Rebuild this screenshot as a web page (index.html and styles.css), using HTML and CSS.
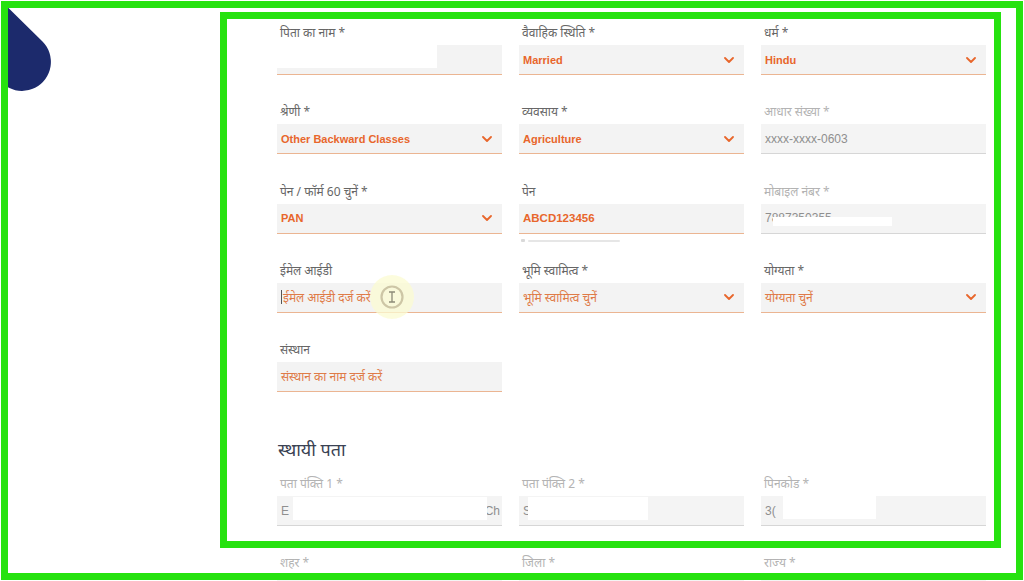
FILE: index.html
```html
<!DOCTYPE html>
<html lang="hi">
<head>
<meta charset="utf-8">
<title>फॉर्म</title>
<link rel="stylesheet" href="styles.css">
</head>
<body>
<div class="screen">
  <aside class="side">
    <svg class="logo" viewBox="8 8 52 92" width="52" height="92" aria-hidden="true">
      <path d="M-20 -20 L42.5 41.5 A29 29 0 1 1 -6.7 66.7 Z" fill="#1c2a6c"/>
    </svg>
  </aside>

  <main class="form">
    <div class="grid">
      <div class="field">
        <label class="lbl">पिता का नाम *</label>
        <div class="input"><span class="redact r-father"></span></div>
      </div>
      <div class="field">
        <label class="lbl">वैवाहिक स्थिति *</label>
        <div class="input select"><span class="val">Married</span><svg class="chev" viewBox="0 0 10 6" width="10" height="6"><path d="M1 1l4 4 4-4"/></svg></div>
      </div>
      <div class="field">
        <label class="lbl">धर्म *</label>
        <div class="input select"><span class="val">Hindu</span><svg class="chev" viewBox="0 0 10 6" width="10" height="6"><path d="M1 1l4 4 4-4"/></svg></div>
      </div>

      <div class="field">
        <label class="lbl">श्रेणी *</label>
        <div class="input select"><span class="val">Other Backward Classes</span><svg class="chev" viewBox="0 0 10 6" width="10" height="6"><path d="M1 1l4 4 4-4"/></svg></div>
      </div>
      <div class="field">
        <label class="lbl">व्यवसाय *</label>
        <div class="input select"><span class="val">Agriculture</span><svg class="chev" viewBox="0 0 10 6" width="10" height="6"><path d="M1 1l4 4 4-4"/></svg></div>
      </div>
      <div class="field">
        <label class="lbl lbl-off">आधार संख्या *</label>
        <div class="input off"><span class="val-off">xxxx-xxxx-0603</span></div>
      </div>

      <div class="field">
        <label class="lbl">पेन / फॉर्म 60 चुनें *</label>
        <div class="input select"><span class="val">PAN</span><svg class="chev" viewBox="0 0 10 6" width="10" height="6"><path d="M1 1l4 4 4-4"/></svg></div>
      </div>
      <div class="field">
        <label class="lbl">पेन</label>
        <div class="input"><span class="val val-pan">ABCD123456</span></div>
        <div class="hint"><span class="hint-dot"></span><span class="hint-line"></span></div>
      </div>
      <div class="field">
        <label class="lbl lbl-off">मोबाइल नंबर *</label>
        <div class="input off"><span class="val-off">7887350355</span><span class="redact r-mobile"></span></div>
      </div>

      <div class="field">
        <label class="lbl">ईमेल आईडी</label>
        <div class="input"><span class="caret"></span><span class="ph">ईमेल आईडी दर्ज करें</span>
          <svg class="cursor" viewBox="0 0 50 50" width="50" height="50" aria-hidden="true">
            <circle cx="25" cy="25" r="22" fill="#fbfbd2" opacity="0.75"/>
            <circle cx="25" cy="25" r="10.5" fill="none" stroke="#cdc6a6" stroke-width="2.2"/>
            <path d="M22 20h6M25 20v10M22 30h6" fill="none" stroke="#8c8a78" stroke-width="1.3"/>
          </svg>
        </div>
      </div>
      <div class="field">
        <label class="lbl">भूमि स्वामित्व *</label>
        <div class="input select"><span class="ph">भूमि स्वामित्व चुनें</span><svg class="chev" viewBox="0 0 10 6" width="10" height="6"><path d="M1 1l4 4 4-4"/></svg></div>
      </div>
      <div class="field">
        <label class="lbl">योग्यता *</label>
        <div class="input select"><span class="ph">योग्यता चुनें</span><svg class="chev" viewBox="0 0 10 6" width="10" height="6"><path d="M1 1l4 4 4-4"/></svg></div>
      </div>

      <div class="field">
        <label class="lbl">संस्थान</label>
        <div class="input"><span class="ph">संस्थान का नाम दर्ज करें</span></div>
      </div>
    </div>

    <h2 class="section-title">स्थायी पता</h2>

    <div class="grid">
      <div class="field">
        <label class="lbl lbl-off">पता पंक्ति 1 *</label>
        <div class="input off split"><span class="val-off">E</span><span class="val-off">Ch</span><span class="redact r-addr1"></span></div>
      </div>
      <div class="field">
        <label class="lbl lbl-off">पता पंक्ति 2 *</label>
        <div class="input off"><span class="val-off">S</span><span class="redact r-addr2"></span></div>
      </div>
      <div class="field">
        <label class="lbl lbl-off">पिनकोड *</label>
        <div class="input off"><span class="val-off">3(</span><span class="redact r-pin"></span></div>
      </div>

      <div class="field">
        <label class="lbl lbl-off">शहर *</label>
        <div class="input off"></div>
      </div>
      <div class="field">
        <label class="lbl lbl-off">जिला *</label>
        <div class="input off"></div>
      </div>
      <div class="field">
        <label class="lbl lbl-off">राज्य *</label>
        <div class="input off"></div>
      </div>
    </div>
  </main>

  <div class="frame frame-outer"></div>
  <div class="frame frame-inner"></div>
</div>
</body>
</html>
```

FILE: styles.css
```css
* { box-sizing: border-box; }

html, body {
  margin: 0;
  padding: 0;
  background: #ffffff;
}

body {
  font-family: "Noto Sans", "Liberation Sans", sans-serif;
}

.screen {
  position: relative;
  display: flex;
  width: 1024px;
  height: 581px;
  overflow: hidden;
  background: #ffffff;
}

.side {
  flex: none;
  width: 277px;
  padding: 8px 0 0 8px;
}

.logo {
  display: block;
}

.form {
  flex: none;
  width: 709px;
  padding-top: 25px;
}

.grid {
  display: grid;
  grid-template-columns: repeat(3, 225px);
  column-gap: 17px;
  row-gap: 29.25px;
}

.field {
  display: flex;
  flex-direction: column;
}

.lbl {
  display: block;
  height: 16px;
  margin-bottom: 4px;
  padding-left: 3px;
  font-size: 12px;
  line-height: 16px;
  color: #666666;
  white-space: nowrap;
}

.lbl-off {
  color: #b3b3b3;
}

.input {
  position: relative;
  display: flex;
  align-items: center;
  height: 30px;
  padding: 0 10px 0 4px;
  background: #f3f3f3;
  border-bottom: 1.5px solid #ebb592;
  font-size: 12px;
}

.input.off {
  background: #f4f4f4;
  border-bottom-color: #d6d6d6;
}

.select {
  justify-content: space-between;
}

.split {
  justify-content: space-between;
  padding-right: 2px;
}

.val {
  font-family: "Liberation Sans", Arial, sans-serif;
  font-size: 11px;
  font-weight: 700;
  color: #e8662b;
}

.val-pan {
  font-size: 11.5px;
}

.val-off {
  font-family: "Liberation Sans", Arial, sans-serif;
  font-size: 12px;
  color: #8f8f8f;
}

.ph {
  font-size: 12px;
  color: #df7b48;
  white-space: nowrap;
}

.chev {
  flex: none;
}

.chev path {
  fill: none;
  stroke: #e8662b;
  stroke-width: 1.8;
  stroke-linecap: round;
  stroke-linejoin: round;
}

.caret {
  display: inline-block;
  width: 1px;
  height: 14px;
  margin-right: 1px;
  background: #555555;
}

.cursor {
  position: absolute;
  left: 90px;
  top: -11px;
  pointer-events: none;
}

.hint {
  display: flex;
  align-items: center;
  gap: 3px;
  height: 4px;
  margin-top: 5px;
  margin-bottom: -9px;
  padding-left: 2px;
}

.hint-dot {
  width: 4px;
  height: 3px;
  background: #d9d9d9;
  border-radius: 1px;
}

.hint-line {
  width: 92px;
  height: 2px;
  background: #e6e6e6;
  border-radius: 1px;
}

.redact {
  position: absolute;
  background: #ffffff;
}

.r-father { left: 0; top: 0; width: 160px; height: 23px; }
.r-mobile { left: 12px; top: 13px; width: 119px; height: 9px; }
.r-addr1  { left: 16px; top: 1px; width: 194px; height: 23px; }
.r-addr2  { left: 9px;  top: 1px; width: 120px; height: 23px; }
.r-pin    { left: 22px; top: 0;   width: 93px;  height: 23px; }

.section-title {
  margin: 45px 0 15px 1px;
  height: 24px;
  font-size: 18px;
  line-height: 24px;
  font-weight: 400;
  color: #3a4253;
}

.frame {
  position: absolute;
  border: 7px solid #26e20f;
  pointer-events: none;
}

.frame-outer {
  left: 1px;
  top: 1px;
  width: 1022px;
  height: 579px;
}

.frame-inner {
  left: 220px;
  top: 12px;
  width: 781px;
  height: 536px;
}
```
